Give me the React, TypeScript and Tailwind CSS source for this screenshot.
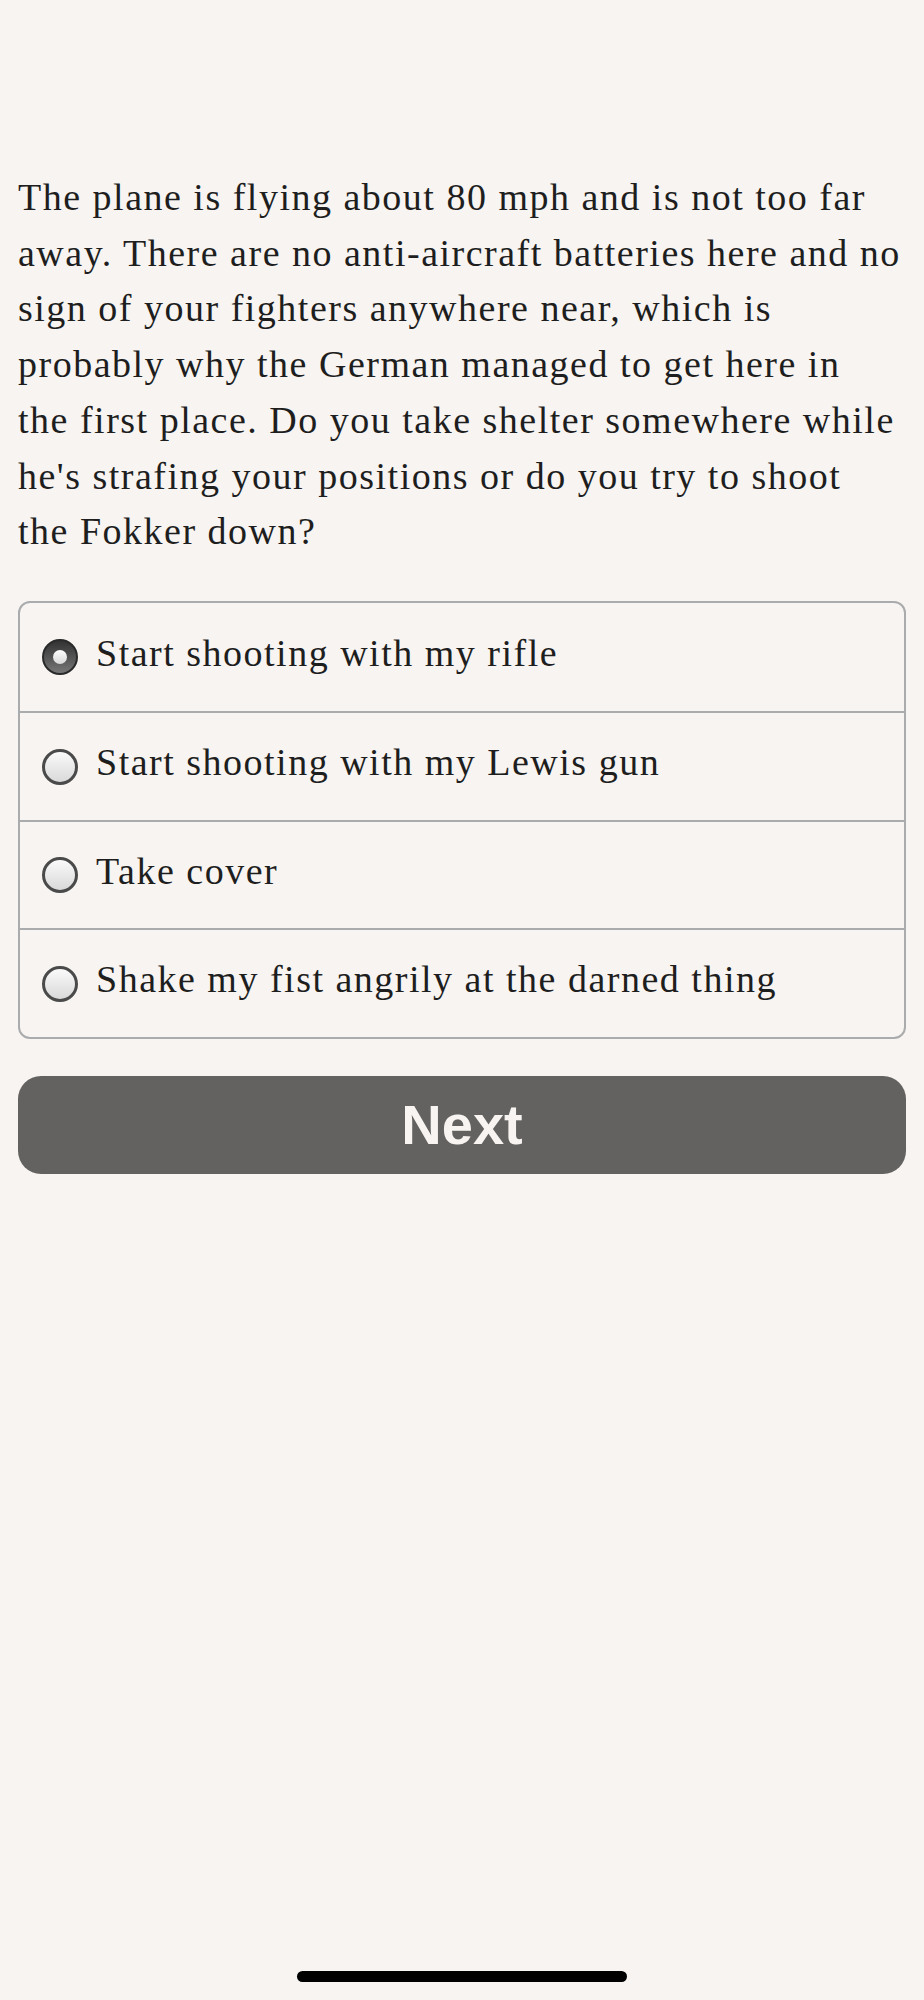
import React, { useState } from 'react';

const OPTIONS = [
  'Start shooting with my rifle',
  'Start shooting with my Lewis gun',
  'Take cover',
  'Shake my fist angrily at the darned thing',
];

function Radio({ checked }: { checked: boolean }) {
  if (checked) {
    return (
      <span className="flex h-[36px] w-[36px] shrink-0 items-center justify-center rounded-full border-2 border-[#2a2a2a] bg-gradient-to-b from-[#333333] to-[#777777]">
        <span className="h-[14px] w-[14px] rounded-full bg-gradient-to-b from-[#ffffff] to-[#d8d8d8]" />
      </span>
    );
  }
  return (
    <span className="h-[36px] w-[36px] shrink-0 rounded-full border-[3px] border-[#4a4a4a] bg-gradient-to-b from-[#fafafa] to-[#d9d9d9]" />
  );
}

export default function App() {
  const [selected, setSelected] = useState(0);

  return (
    <div className="flex h-[2000px] flex-col bg-[#f7f4f1] px-[18px] pt-[170px] text-[#1e1e1e] font-['Liberation_Serif',serif]">
      <p className="text-[38px] leading-[55.7px] tracking-[1.5px]">
        The plane is flying about 80 mph and is not too far
        <br />
        away. There are no anti-aircraft batteries here and no
        <br />
        sign of your fighters anywhere near, which is
        <br />
        probably why the German managed to get here in
        <br />
        the first place. Do you take shelter somewhere while
        <br />
        he's strafing your positions or do you try to shoot
        <br />
        the Fokker down?
      </p>

      <div className="mt-[41px] overflow-hidden rounded-[12px] border-2 border-[#a9abad]">
        {OPTIONS.map((opt, i) => (
          <button
            key={opt}
            onClick={() => setSelected(i)}
            className={
              'flex h-[108.5px] w-full items-center gap-[18px] pl-[22px] text-left text-[38px] tracking-[1.5px] ' +
              (i > 0 ? 'border-t-2 border-[#a9abad]' : '')
            }
          >
            <Radio checked={selected === i} />
            <span className="pb-[8px]">{opt}</span>
          </button>
        ))}
      </div>

      <button className="mt-[37px] flex h-[98px] w-full shrink-0 items-center justify-center rounded-[23px] bg-[#636261] text-[56px] font-bold text-[#f7f4f1] font-['Liberation_Sans',Arial,sans-serif]">
        Next
      </button>

      <div className="flex-1" />

      <div className="flex justify-center pb-[18px]">
        <div className="h-[11px] w-[330px] rounded-full bg-black" />
      </div>
    </div>
  );
}
